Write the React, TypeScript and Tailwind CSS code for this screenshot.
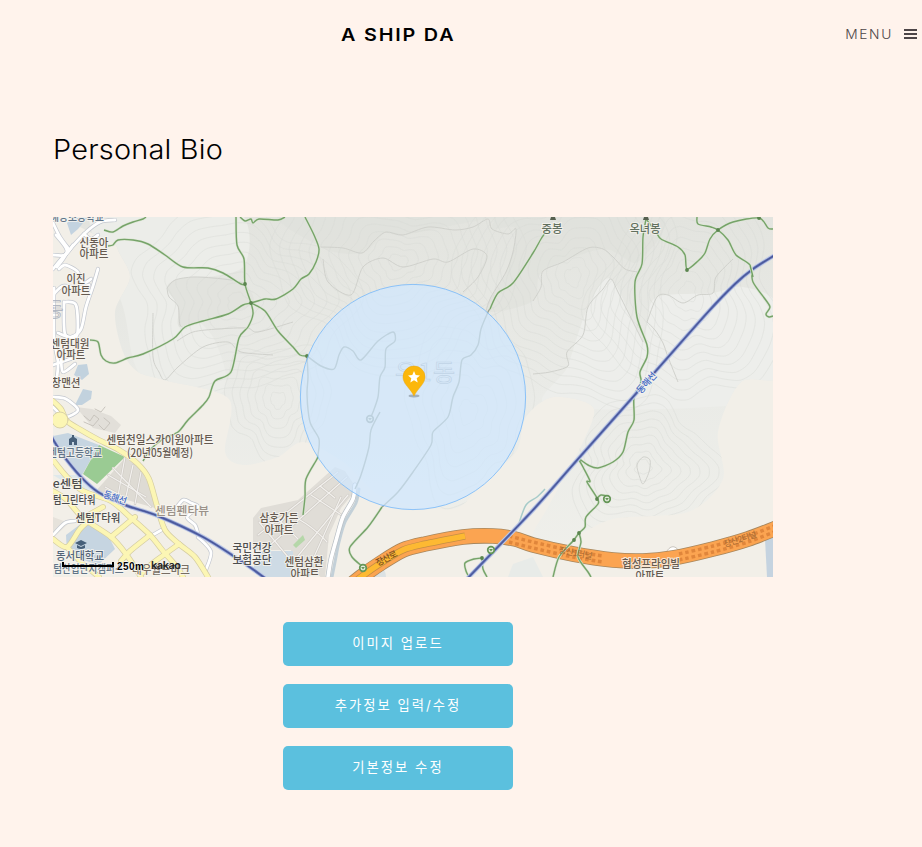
import React from "react";

type Pt = [number, number];

// Builds a smooth path through the listed points.
function curve(points: string, closed = false): string {
  const p = points.trim().split(/\s+/).map((s) => s.split(",").map(Number) as Pt);
  const n = p.length;
  const at = (i: number): Pt => (closed ? p[(i + n) % n] : p[Math.max(0, Math.min(n - 1, i))]);
  let d = `M${p[0][0]} ${p[0][1]}`;
  const end = closed ? n : n - 1;
  for (let i = 0; i < end; i++) {
    const [a, b, c, e] = [at(i - 1), at(i), at(i + 1), at(i + 2)];
    const k = 7;
    d += `C${b[0] + (c[0] - a[0]) / k} ${b[1] + (c[1] - a[1]) / k} ${c[0] - (e[0] - b[0]) / k} ${c[1] - (e[1] - b[1]) / k} ${c[0]} ${c[1]}`;
  }
  return closed ? d + "Z" : d;
}

// One contour ring: an ellipse whose radius undulates with the angle.
function ring(cx: number, cy: number, rx: number, ry: number, seed: number): string {
  const pts: string[] = [];
  for (let i = 0; i < 40; i++) {
    const t = (i / 40) * Math.PI * 2;
    const w = 1 + 0.11 * Math.sin(3 * t + seed) + 0.07 * Math.sin(5 * t + seed * 2) + 0.04 * Math.sin(9 * t + seed);
    pts.push(`${(cx + rx * w * Math.cos(t)).toFixed(1)},${(cy + ry * w * Math.sin(t)).toFixed(1)}`);
  }
  return curve(pts.join(" "), true);
}

const hills = [
  { cx: 185, cy: 85, rx: 108, ry: 92, seed: 1, n: 10 },
  { cx: 345, cy: 45, rx: 125, ry: 100, seed: 2.4, n: 13 },
  { cx: 520, cy: 60, rx: 105, ry: 125, seed: 4, n: 13 },
  { cx: 635, cy: 75, rx: 90, ry: 110, seed: 5.2, n: 11 },
  { cx: 590, cy: 250, rx: 72, ry: 66, seed: 0.4, n: 9 },
  { cx: 225, cy: 183, rx: 52, ry: 58, seed: 3, n: 7 },
  { cx: 415, cy: 195, rx: 62, ry: 85, seed: 2, n: 7 },
];

const trails = [
  "51,13 60,15 70,9 80,5 90,2 93,0",
  "55,29 60,28 65,23 80,23 95,27 112,38 130,50 155,51 170,56 188,67 192,67",
  "183,0 184,28 191,42 192,67 198,86 200,97 195,110 186,121 178,155 162,164 156,180 150,188 135,203 125,215 110,222 97,233 90,244",
  "37,123 45,125 48,138 53,144 62,146 75,141 90,137 120,122 132,110 150,104 175,97 190,88 198,86 212,82 223,82 240,72 248,62 256,57 263,45 266,32 261,18 252,0",
  "198,86 212,94 225,114 240,130 247,138 254,139",
  "187,0 192,4 198,2 200,6 206,2 225,3 232,0",
  "265,238 264,242 253,262 252,280 250,298",
  "495,12 488,22 480,36 460,66 445,76 437,92",
  "329,290 315,310 297,330 299,340 310,350",
  "593,2 590,20 589,47 582,65 584,100 594,128 594,140 587,155 588,165 581,180 581,203 575,215 570,235 560,245 545,251 535,248 526,242 530,250 537,264 534,265 544,281 545,287 533,300 532,310 526,316 520,324 506,340 500,360",
  "526,316 528,325 525,340 535,355 538,360",
  "544,281 548,278 554,279",
  "593,2 603,15 608,22 625,30 632,38 634,52 645,44 652,36 657,22 665,13 680,5 706,1 715,11 720,12",
  "644,0 645,7 658,10 665,13 675,23 683,38 697,48 700,65 712,82 717,90 713,97 716,100 720,99",
  "429,341 421,342 412,346 413,354 416,360",
  "429,341 430,352 434,360",
];

// Trails that run beneath the search radius.
const fadedTrails = [
  "254,139 255,160 254,178 257,205 266,222 265,238",
  "254,139 268,149 281,152 286,138 291,130 300,134 308,143 325,124 340,115 342,124 333,132 332,150 327,160 325,180 320,195 317,202",
  "327,195 318,213 316,230 308,258 302,272",
  "437,92 435,95 428,112 425,128 418,138 409,143 406,165 400,180 395,200 380,215 378,228 360,255 345,275 329,290",
];

const contours = [
  "114,71 122,63 140,60 160,61 178,63 190,66",
  "114,71 116,80 125,89 127,108 134,111",
  "124,124 140,115 165,112 194,111 205,115 240,105",
  "268,30 290,31 309,36 321,24 333,15 350,18 375,10 402,13 420,10 435,2 439,12 455,17 463,12 460,35 453,55 438,80 433,94",
  "480,84 488,70 490,54 510,45 535,31 550,32 560,40 572,52 585,55",
  "480,157 497,155 515,149 514,135 530,118 535,90 550,72 558,62 565,75 580,105 590,125",
  "594,105 604,80 615,78 630,86 645,78 660,76 663,60 680,42",
  "594,105 602,113 610,126 615,140 625,165",
  "270,42 275,65 298,78 310,50 330,41 350,50 380,42 395,45 420,32 434,39 425,60 410,75",
  "100,96 100,140 106,155 112,163 125,150 150,130 175,125 188,135 220,138",
  "586,258 584,248 590,240 597,243 596,255 590,267 586,258",
];

const yellowRoads = [
  "0,184 8,192 14,204 28,213 44,222 66,233 85,247 96,262 104,289 112,313 126,327 142,340 155,360",
  "0,243 14,260 30,274 58,284 77,300 97,318 110,334 124,350 130,360",
  "0,274 14,283 30,301 58,320 73,337 88,360",
  "58,320 82,300",
  "97,318 77,334 68,344",
  "126,327 100,346 88,357",
  "0,322 14,330 27,312 40,300",
  "14,330 28,345 46,360",
  "30,301 50,290",
];

const whiteRoads = [
  "0,52 11,39 31,17 47,5 62,3",
  "0,6 7,20 15,31",
  "31,17 38,22 45,18",
  "4,50 14,34 3,18",
  "6,52 12,48 24,54 30,66 38,62",
  "45,52 40,69 33,90 28,112 18,120 5,116",
  "0,78 10,69 25,71 36,68",
  "11,85 12,117 24,118 23,88 11,85",
  "1,71 1,120 5,145 4,160",
  "8,140 10,155 22,147",
  "0,148 20,141",
  "0,38 12,38 20,28",
  "0,190 12,200 25,193 13,182 0,180",
  "98,319 112,311",
  "121,294 130,283 138,286 145,290 134,300 142,308 145,317",
  "0,318 12,306 22,304",
  "145,320 158,335 152,355",
];

const smallRoads = [
  "55,258 93,280", "60,251 98,290", "52,270 72,281", "72,240 65,279", "80,248 72,284", "88,255 82,287",
  "205,318 285,255", "215,330 294,260", "240,345 295,278", "252,360 288,280", "258,278 290,299",
  "220,297 245,322", "206,305 240,346", "267,269 282,281", "225,310 235,298 252,306 266,317 274,325",
];

interface LabelProps {
  x: number;
  y: number;
  w: number;
  children: string;
  color?: string;
  size?: number;
  turn?: number;
}

function Label({ x, y, w, children, color = "#655a50", size = 11.5, turn = 0 }: LabelProps) {
  return (
    <text
      x={x}
      y={y}
      textAnchor="middle"
      textLength={w}
      lengthAdjust="spacingAndGlyphs"
      fontSize={size}
      fontWeight={500}
      fill={color}
      stroke="#f7f5f0"
      strokeWidth={2}
      strokeOpacity={0.8}
      paintOrder="stroke"
      transform={`rotate(${turn} ${x} ${y})`}
    >
      {children}
    </text>
  );
}

function Place({ x, y, color = "#659657" }: { x: number; y: number; color?: string }) {
  return (
    <g>
      <circle cx={x} cy={y} r={3.3} fill="#e4ebdc" stroke={color} strokeWidth={1.7} />
      <path d={`M${x - 1.9} ${y - 0.9}h3.8l-1.9 2.4z`} fill={color} />
    </g>
  );
}

function KakaoMap() {
  const highway = curve("292,373 308,360 328,346 350,333 372,327 410,320 440,319 462,322 480,328 520,337 560,343 590,344 620,341 660,332 695,322 726,310");
  const fastLane = curve("292,373 308,360 328,346 350,333 372,327 412,319");
  const tunnelRows = [
    "456,319 480,325 520,334 550,339",
    "456,325 480,331 520,340 550,345",
    "626,337 660,329 695,319 726,307",
    "626,343 660,335 695,325 726,313",
  ];
  const railEast = curve("722,38 700,52 682,67 655,95 602,155 580,180 525,242 480,293 414,362");
  const railWest = curve("-2,219 10,238 28,260 45,275 72,288 105,299 150,320 185,342 212,361");
  return (
    <svg viewBox="0 0 720 360" className="block h-[360px] w-[720px] overflow-hidden font-['Noto_Sans_CJK_KR','Noto_Sans',sans-serif]">
      <defs>
        <clipPath id="hillArea">
          <path d={curve("58,-10 64,30 77,60 62,95 70,135 85,155 115,164 176,182 172,235 190,248 225,240 250,225 290,245 330,280 400,292 430,265 463,235 473,200 500,180 540,190 530,225 495,290 480,320 510,325 560,302 635,295 670,262 665,215 688,165 735,150 735,-10", true)} />
        </clipPath>
        <linearGradient id="hillTone" x1="0" y1="0" x2="0" y2="1">
          <stop offset="0" stopColor="#e3e4df" />
          <stop offset="0.5" stopColor="#eaebe7" />
          <stop offset="1" stopColor="#f0f0eb" />
        </linearGradient>
      </defs>

      <rect width={720} height={360} fill="#f2efe8" />
      <g clipPath="url(#hillArea)">
        <rect width={720} height={360} fill="url(#hillTone)" />
        <path d={curve("40,-10 70,90 90,160 170,175 160,120 115,70 190,50 180,-10", true)} fill="#ecede9" />
        <path d={curve("114,71 125,62 160,60 190,66 198,88 135,108 125,108 125,89", true)} fill="#e2e3de" />
        <path d={curve("240,-10 268,30 309,36 333,15 350,18 435,2 439,12 463,12 453,55 433,94 480,84 490,54 550,32 585,45 590,-10", true)} fill="#dfe0da" opacity={0.55} />
        <path d={curve("535,90 558,62 590,125 594,105 604,80 660,76 690,70 725,90 725,180 500,190 515,149", true)} fill="#edeeeb" />
        {hills.map((h) =>
          Array.from({ length: h.n }, (_, i) => {
            const s = (i + 1) / h.n;
            return <path key={`${h.cx}-${i}`} d={ring(h.cx, h.cy, h.rx * s, h.ry * s, h.seed + i * 0.06)} fill="none" stroke="#d8dad6" strokeWidth={0.8} opacity={0.55} />;
          }),
        )}
        {contours.map((c) => (
          <path key={c} d={curve(c)} fill="none" stroke="#d0d1cc" strokeWidth={1} />
        ))}
      </g>

      {/* Built-up blocks, water and campus grounds */}
      <g>
        <path d="M200 301L208 291L245 283L282 250L292 254L304 272L288 291L276 318L272 360H242L238 333L200 333Z" fill="#e0ddd7" />
        <path d="M43 274L72 241L86 249L97 270L102 291Z" fill="#dedbd4" />
        <path d="M23 190L39 192L58 199L68 208L62 216L40 211Z" fill="#e2dfd9" />
        <path d="M14 6L20 0H35L25 12L18 18Z" fill="#c3d3e0" />
        <path d="M25 148L34 147L36 157L29 163L21 158Z" fill="#c2d2de" />
        <path d="M30 172L39 174L38 182L29 188L22 188Z" fill="#c2d2de" />
        <path d="M0 219L15 216L46 228L29 258L22 255Z" fill="#c6d5e1" />
        <path d="M13 318L33 303L56 320L62 332L45 348L14 337Z" fill="#c6d5e1" />
        <path d="M0 300L16 306L0 321Z" fill="#e6e2db" />
        <path d="M205 334H240V360H211L200 353Z" fill="#cedbe5" />
        <path d="M712 322L720 317V360H714Z" fill="#c5d3e0" />
        <path d="M46 228L72 240L44 267L30 257Z" fill="#9acb93" />
        <path d="M0 258H23L41 272L33 274L20 270Z" fill="#d7e5ed" opacity={0.7} />
        <path d="M460 347L480 340L490 360H455Z" fill="#e8ebe8" />
        <circle cx={320} cy={360} r={13} fill="#dce2e4" />
      </g>
      <g fill="none" strokeLinecap="round" strokeLinejoin="round">
        {smallRoads.map((r) => <path key={r} d={curve(r)} stroke="#cfcbc5" strokeWidth={2.4} />)}
        {smallRoads.map((r) => <path key={r} d={curve(r)} stroke="#f3f1ee" strokeWidth={1.2} />)}
        <path d="M240 328L250 318L252 323L243 331Z" fill="#b5d7a9" />
        {whiteRoads.map((r) => <path key={r} d={curve(r)} stroke="#c4c8cf" strokeWidth={4.2} />)}
        {whiteRoads.map((r) => <path key={r} d={curve(r)} stroke="#ffffff" strokeWidth={2.8} />)}
        <path d={curve("306,272 303,286 292,305 286,325 282,345 279,360")} stroke="#c3d0d8" strokeWidth={3} />
        <path d={curve("302,268 300,282 290,300 284,320 278,342 275,360")} stroke="#b8bec4" strokeWidth={5} />
        <path d={curve("302,268 300,282 290,300 284,320 278,342 275,360")} stroke="#ffffff" strokeWidth={3.6} />
        {yellowRoads.map((r) => <path key={r} d={curve(r)} stroke="#d5cda3" strokeWidth={5.8} />)}
        {yellowRoads.map((r) => <path key={r} d={curve(r)} stroke="#fcf6b4" strokeWidth={4.4} />)}
        <circle cx={7} cy={203} r={8} fill="#fcf6b4" stroke="#d9d1a7" />
        <path d="M31 199l6 5 4-6 5 4-6 7-9-4M42 192l6 3 4-5M51 201l6 5-6 7-5-5" stroke="#c8c4bd" />
        <path d="M612 337Q620 322 628 337" stroke="#c9c5be" fill="#ffffff" />
      </g>

      <g fill="none" strokeLinejoin="round">
        <path d={highway} stroke="#a7865c" strokeWidth={15.6} />
        <path d={highway} stroke="#fba451" strokeWidth={14} />
        <path d={fastLane} stroke="#c58e45" strokeWidth={7} />
        <path d={fastLane} stroke="#fdb932" strokeWidth={5.6} />
        {tunnelRows.map((r) => (
          <path key={r} d={curve(r)} stroke="#e0863b" strokeWidth={3.4} strokeDasharray="3.6 2.9" />
        ))}
        <path d={curve("492,272 484,280 473,288 466,306")} stroke="#a6cbc9" strokeWidth={1.5} />
        {fadedTrails.map((t) => <path key={t} d={curve(t)} stroke="#9aa393" strokeWidth={1.4} />)}
        {trails.map((t) => <path key={t} d={curve(t)} stroke="#dbe5d3" strokeWidth={2.6} />)}
        {trails.map((t) => <path key={t} d={curve(t)} stroke="#76a369" strokeWidth={1.4} />)}
        {[railEast, railWest].map((r, i) => (
          <g key={i}>
            <path d={r} stroke="#c0cbe6" strokeWidth={4.4} />
            <path d={r} stroke="#6070b4" strokeWidth={2.5} />
            <path d={r} stroke="#465394" strokeWidth={1} />
          </g>
        ))}
        <path d="M697 48L700 58" stroke="#dfe8d6" strokeWidth={3} />
        <path d="M697 48L700 60" stroke="#70a062" strokeWidth={1.4} />
      </g>
      <g fill="#5b854f">
        {["192,67", "198,86", "254,139", "665,13", "706,1", "634,53", "544,282", "526,316", "521,323", "429,341"].map((s) => {
          const [x, y] = s.split(",").map(Number);
          return <circle key={s} cx={x} cy={y} r={1.9} />;
        })}
        <path d="M497 3L498 0H502L503 3ZM590 3L591 0H595L596 3Z" fill="#55604f" />
      </g>
      <Place x={554} y={282} />
      <Place x={438} y={333} />
      <Place x={310} y={351} />
      <Place x={317} y={202} color="#929c90" />

      <text x={372} y={164} textAnchor="middle" fontSize={24} textLength={60} fill="none" stroke="#9ea5aa" strokeWidth={0.7}>우1동</text>
      <text x={-8} y={100} fontSize={20} fill="none" stroke="#a9aebb" strokeWidth={0.7}>동</text>

      <Label x={24} y={4} w={54} color="#617487">해동초등학교</Label>
      <Label x={41} y={30} w={29}>신동아</Label>
      <Label x={41} y={41} w={29}>아파트</Label>
      <Label x={23} y={66} w={19}>이진</Label>
      <Label x={23} y={78} w={29}>아파트</Label>
      <Label x={17} y={131} w={39}>센텀대원</Label>
      <Label x={18} y={142} w={29}>아파트</Label>
      <Label x={13} y={170} w={29}>창맨션</Label>
      <Label x={107} y={227} w={107}>센텀천일스카이원아파트</Label>
      <Label x={107} y={240} w={66}>(20년05월예정)</Label>
      <Label x={22} y={240} w={54} color="#617487">센텀고등학교</Label>
      <Label x={9} y={271} w={41} color="#4d4d4d">더e센텀</Label>
      <Label x={17} y={287} w={51} color="#4d4d4d">센텀그린타워</Label>
      <Label x={45} y={305} w={45} color="#4d4d4d">센텀T타워</Label>
      <Label x={129} y={298} w={54} color="#9b9289">센텀펜타뷰</Label>
      <Label x={27} y={343} w={48} color="#526579">동서대학교</Label>
      <Label x={31} y={356} w={79} color="#617487">센텀산업단지캠퍼스</Label>
      <Label x={108} y={357} w={58} color="#776d63">대우월드마크</Label>
      <Label x={226} y={305} w={39}>삼호가든</Label>
      <Label x={226} y={317} w={29}>아파트</Label>
      <Label x={199} y={335} w={39} color="#4d4d4d">국민건강</Label>
      <Label x={199} y={347} w={39} color="#4d4d4d">보험공단</Label>
      <Label x={251} y={349} w={39}>센텀삼환</Label>
      <Label x={252} y={361} w={29}>아파트</Label>
      <Label x={598} y={351} w={58}>협성프라임빌</Label>
      <Label x={597} y={363} w={29}>아파트</Label>
      <Label x={499} y={16} w={21} color="#62705f">중봉</Label>
      <Label x={592} y={16} w={31} color="#62705f">옥녀봉</Label>
      <Label x={61} y={284} w={24} size={9.5} color="#456bc6" turn={19}>동해선</Label>
      <Label x={596} y={168} w={25} size={9.5} color="#456bc6" turn={-48}>동해선</Label>
      <g fill="#b06f34" fontSize={8.5} fontWeight={500} textAnchor="middle">
        <text x={335} y={344} textLength={23} fill="#7b4d1d" fontSize={9} transform="rotate(-27 335 344)">장산로</text>
        <text x={522} y={339} textLength={34} transform="rotate(11 522 339)">장산1터널</text>
        <text x={688} y={325} textLength={34} transform="rotate(-18 688 325)">장산2터널</text>
      </g>

      <g fill="#465f79">
        <path d="M16 228V222L19 220V218H21V220L24 222V228H21V225H19V228Z" />
        <path d="M22 326L28 323L34 326L28 329ZM24 328V331Q28 333 32 331V328L28 330Z" />
      </g>

      <circle cx={360} cy={180} r={112.6} fill="#cfe7ff" fillOpacity={0.7} stroke="#75b8fa" strokeWidth={1} strokeOpacity={0.8} />

      <ellipse cx={361} cy={179} rx={5.5} ry={1.4} fill="#77818a" opacity={0.55} />
      <path d="M361 179C357.5 171.5 350 167 350 160A11 11 0 0 1 372 160C372 167 364.5 171.5 361 179Z" fill="#fcb70b" stroke="#e9a50a" strokeWidth={0.5} />
      <path d="M361 154L362.7 158.1L367 158.4L363.7 161.2L364.7 165.5L361 163.2L357.3 165.5L358.3 161.2L355 158.4L359.3 158.1Z" fill="#ffffff" />

      <path d="M10 345V349H60V345" fill="none" stroke="#000000" strokeWidth={2} />
      <text x={64} y={353} fontSize={10} textLength={27} fill="#000000" stroke="#ffffff" strokeWidth={1} paintOrder="stroke" fontWeight={700} className="font-['Liberation_Sans',sans-serif]">250m</text>
      <text x={98} y={352} fontSize={11} textLength={30} fill="#262626" fontWeight={600} className="font-[Inter,sans-serif]">kakao</text>
    </svg>
  );
}

const actions = ["이미지 업로드", "추가정보 입력/수정", "기본정보 수정"];

export default function App() {
  return (
    <div className="h-[847px] w-[922px] overflow-hidden bg-[#fff3ec] font-[Inter,'Noto_Sans_CJK_KR',sans-serif] text-black">
      <header className="grid h-[68px] grid-cols-[341px_1fr_auto] items-center pr-[5px]">
        <a className="col-start-2 origin-left scale-x-[1.13] pt-[2px] text-[17.5px] leading-none font-semibold tracking-[1.6px] whitespace-nowrap">A SHIP DA</a>
        <button className="flex items-center gap-[11px] text-[#4d4547]">
          <span className="origin-right scale-x-[1.06] text-[13px] leading-none font-light tracking-[1.5px]">MENU</span>
          <svg viewBox="0 0 13 10" className="h-[10px] w-[13px]" fill="none" stroke="currentColor" strokeWidth={2}>
            <path d="M0 1H13M0 5H13M0 9H13" />
          </svg>
        </button>
      </header>
      <main className="pl-[53px]">
        <h1 className="origin-left scale-x-[1.09] pt-[65px] text-[26.5px] leading-[32px] font-light tracking-[0.2px]">Personal Bio</h1>
        <div className="mt-[52px]">
          <KakaoMap />
        </div>
        <div className="mt-[45px] ml-[230px] flex w-[230px] flex-col gap-[18px]">
          {actions.map((a) => (
            <button key={a} className="flex h-[44px] items-center justify-center rounded-[5px] bg-[#5bc0de] text-[13.33px] tracking-[2px] text-white">
              {a}
            </button>
          ))}
        </div>
      </main>
    </div>
  );
}
